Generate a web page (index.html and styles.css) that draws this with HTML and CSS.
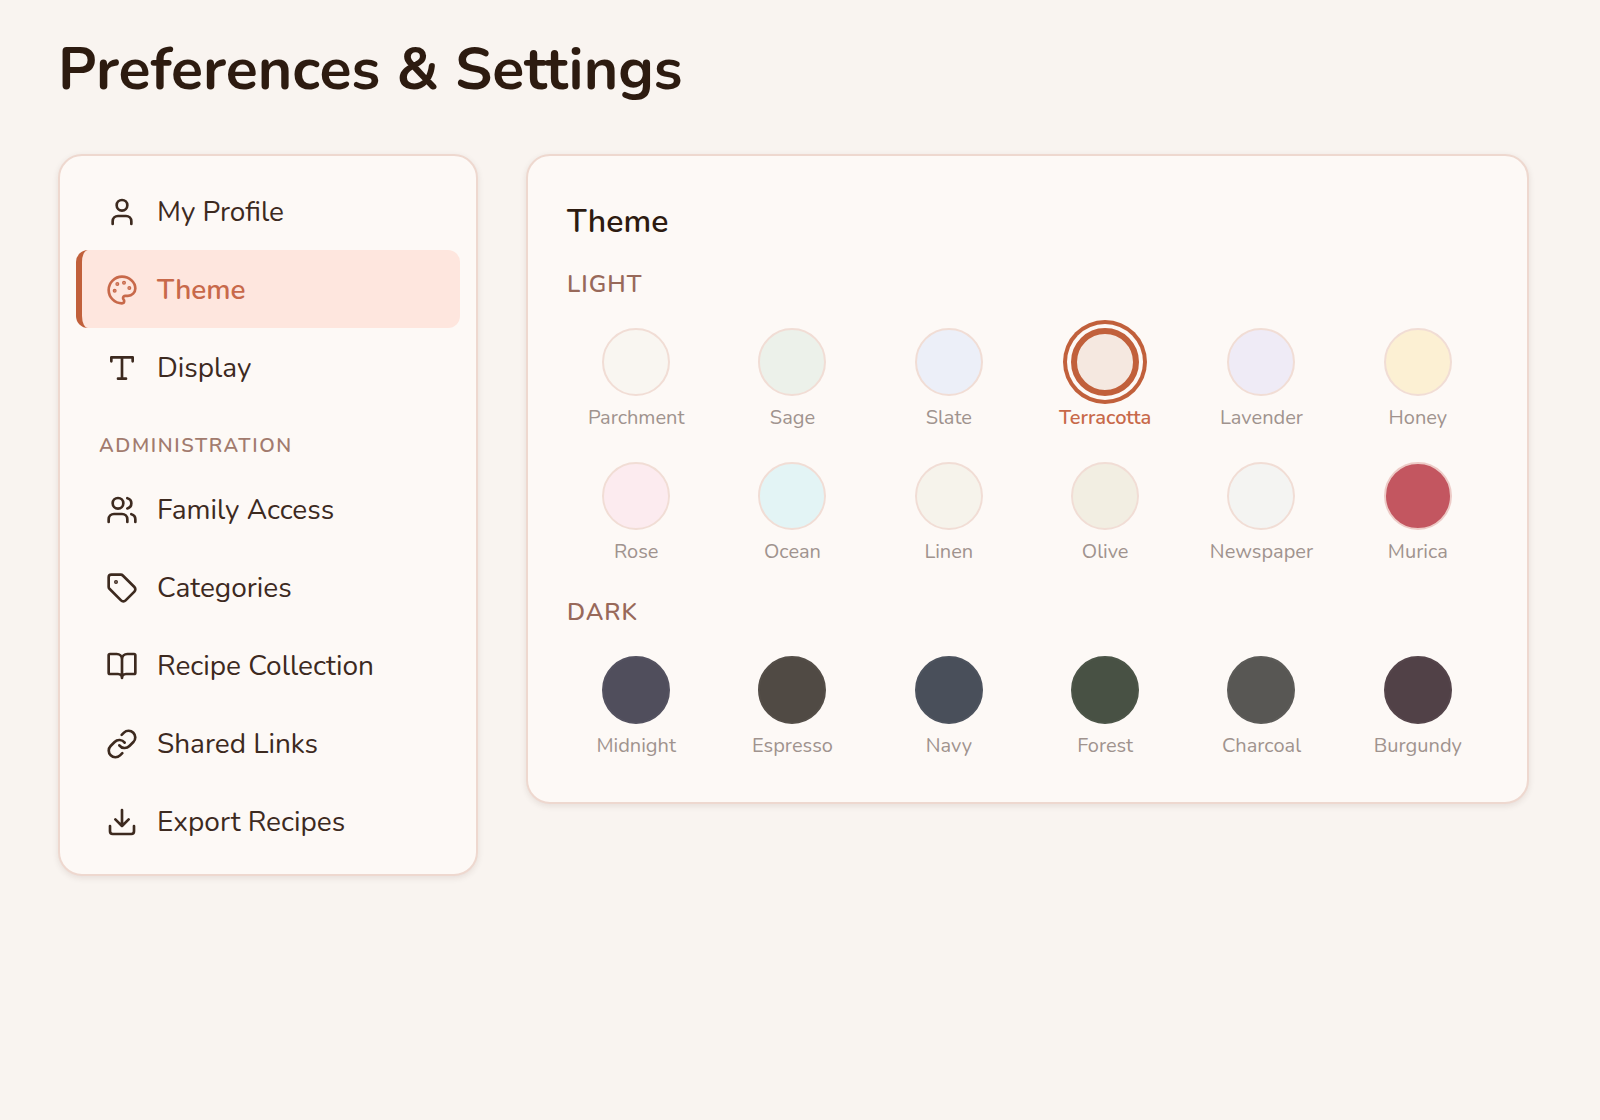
FILE: index.html
```html
<!DOCTYPE html>
<html lang="en">
<head>
  <meta charset="UTF-8">
  <meta name="viewport" content="width=device-width, initial-scale=1">
  <title>Preferences &amp; Settings</title>
  <link rel="stylesheet" href="styles.css">
</head>
<body>
  <h1>Preferences &amp; Settings</h1>

  <div class="layout">
    <!-- Settings menu -->
    <nav class="card sidebar">
      <a class="nav-item" href="#profile">
        <svg class="icon" viewBox="0 0 24 24"><path d="M19 21v-2a4 4 0 0 0-4-4H9a4 4 0 0 0-4 4v2"/><circle cx="12" cy="7" r="4"/></svg>
        My Profile
      </a>
      <a class="nav-item active" href="#theme">
        <svg class="icon" viewBox="0 0 24 24"><g fill="currentColor"><circle cx="13.5" cy="6.5" r=".5"/><circle cx="17.5" cy="10.5" r=".5"/><circle cx="8.5" cy="7.5" r=".5"/><circle cx="6.5" cy="12.5" r=".5"/></g><path d="M12 2C6.5 2 2 6.5 2 12s4.5 10 10 10c.926 0 1.648-.746 1.648-1.688 0-.437-.18-.835-.437-1.125-.29-.289-.438-.652-.438-1.125a1.64 1.64 0 0 1 1.668-1.668h1.996c3.051 0 5.555-2.503 5.555-5.554C21.965 6.012 17.461 2 12 2z"/></svg>
        Theme
      </a>
      <a class="nav-item" href="#display">
        <svg class="icon" viewBox="0 0 24 24"><path d="M4 7V4h16v3M9 20h6M12 4v16"/></svg>
        Display
      </a>

      <h2 class="nav-heading">Administration</h2>
      <a class="nav-item" href="#family">
        <svg class="icon" viewBox="0 0 24 24"><path d="M16 21v-2a4 4 0 0 0-4-4H6a4 4 0 0 0-4 4v2"/><circle cx="9" cy="7" r="4"/><path d="M22 21v-2a4 4 0 0 0-3-3.87M16 3.13a4 4 0 0 1 0 7.75"/></svg>
        Family Access
      </a>
      <a class="nav-item" href="#categories">
        <svg class="icon" viewBox="0 0 24 24"><path d="M12.586 2.586A2 2 0 0 0 11.172 2H4a2 2 0 0 0-2 2v7.172a2 2 0 0 0 .586 1.414l8.704 8.704a2.426 2.426 0 0 0 3.42 0l6.58-6.58a2.426 2.426 0 0 0 0-3.42z"/><circle cx="7.5" cy="7.5" r=".5" fill="currentColor"/></svg>
        Categories
      </a>
      <a class="nav-item" href="#recipes">
        <svg class="icon" viewBox="0 0 24 24"><path d="M12 7v14M3 18a1 1 0 0 1-1-1V4a1 1 0 0 1 1-1h5a4 4 0 0 1 4 4 4 4 0 0 1 4-4h5a1 1 0 0 1 1 1v13a1 1 0 0 1-1 1h-6a3 3 0 0 0-3 3 3 3 0 0 0-3-3z"/></svg>
        Recipe Collection
      </a>
      <a class="nav-item" href="#links">
        <svg class="icon" viewBox="0 0 24 24"><path d="M10 13a5 5 0 0 0 7.54.54l3-3a5 5 0 0 0-7.07-7.07l-1.72 1.71"/><path d="M14 11a5 5 0 0 0-7.54-.54l-3 3a5 5 0 0 0 7.07 7.07l1.71-1.71"/></svg>
        Shared Links
      </a>
      <a class="nav-item" href="#export">
        <svg class="icon" viewBox="0 0 24 24"><path d="M21 15v4a2 2 0 0 1-2 2H5a2 2 0 0 1-2-2v-4M7 10l5 5 5-5M12 15V3"/></svg>
        Export Recipes
      </a>
    </nav>

    <!-- Theme picker -->
    <main class="card panel">
      <h2>Theme</h2>

      <h3>Light</h3>
      <div class="swatches">
        <button class="swatch"><span class="dot parchment"></span>Parchment</button>
        <button class="swatch"><span class="dot sage"></span>Sage</button>
        <button class="swatch"><span class="dot slate"></span>Slate</button>
        <button class="swatch selected" aria-pressed="true"><span class="dot terracotta"></span>Terracotta</button>
        <button class="swatch"><span class="dot lavender"></span>Lavender</button>
        <button class="swatch"><span class="dot honey"></span>Honey</button>
        <button class="swatch"><span class="dot rose"></span>Rose</button>
        <button class="swatch"><span class="dot ocean"></span>Ocean</button>
        <button class="swatch"><span class="dot linen"></span>Linen</button>
        <button class="swatch"><span class="dot olive"></span>Olive</button>
        <button class="swatch"><span class="dot newspaper"></span>Newspaper</button>
        <button class="swatch"><span class="dot murica"></span>Murica</button>
      </div>

      <h3>Dark</h3>
      <div class="swatches">
        <button class="swatch"><span class="dot midnight"></span>Midnight</button>
        <button class="swatch"><span class="dot espresso"></span>Espresso</button>
        <button class="swatch"><span class="dot navy"></span>Navy</button>
        <button class="swatch"><span class="dot forest"></span>Forest</button>
        <button class="swatch"><span class="dot charcoal"></span>Charcoal</button>
        <button class="swatch"><span class="dot burgundy"></span>Burgundy</button>
      </div>
    </main>
  </div>
</body>
</html>
```
FILE: styles.css
```css
* {
  box-sizing: border-box;
}
body {
  margin: 0;
  padding: 34px 71px 32px 58px;
  background-color: #f9f4f0;
  color: #2d1b10;
  font-family: Nunito, Lato, sans-serif;
}
h1 {
  margin: 0 0 48px;
  font-size: 59px;
  line-height: 72px;
  font-weight: 700;
}
.layout {
  display: flex;
  align-items: flex-start;
  gap: 48px;
}
.card {
  background-color: #fdf9f6;
  border: 2px solid #eed8cf;
  border-radius: 24px;
  box-shadow: 0 2px 6px rgba(60, 30, 15, 0.1);
}

/* Sidebar */
.sidebar {
  flex: 0 0 420px;
  padding: 16px 16px 14px;
}
.nav-item {
  display: flex;
  align-items: center;
  gap: 19px;
  height: 78px;
  padding: 2px 24px 0;
  border-left: 6px solid transparent;
  border-radius: 12px;
  color: #3d2a1f;
  font-size: 28px;
  text-decoration: none;
}
.nav-item.active {
  background-color: #fee6de;
  border-left-color: #c1603b;
  color: #c8694a;
  font-weight: 600;
}
.icon {
  flex: none;
  width: 32px;
  height: 32px;
  fill: none;
  stroke: currentColor;
  stroke-width: 2;
  stroke-linecap: round;
  stroke-linejoin: round;
}
.nav-heading {
  margin: 26px 23px 10px;
  color: #a27b6e;
  font-size: 20px;
  line-height: 28px;
  font-weight: 600;
  letter-spacing: 0.08em;
  text-transform: uppercase;
}

/* Theme panel */
.panel {
  flex: 1;
  min-width: 0;
  padding: 42px 40px 34px 39px;
}
.panel h2 {
  margin: 0 0 20px;
  font-size: 32px;
  line-height: 48px;
  font-weight: 600;
}
.panel h3 {
  margin: 0 0 18px;
  color: #98695a;
  font-size: 24px;
  line-height: 36px;
  font-weight: 600;
  letter-spacing: 1px;
  text-transform: uppercase;
}
.swatches {
  display: grid;
  grid-template-columns: repeat(6, 1fr);
  gap: 14px 18px;
}
.swatches + h3 {
  margin-top: 20px;
}
.swatch {
  display: flex;
  flex-direction: column;
  align-items: center;
  gap: 8px;
  padding: 8px 0;
  border: 0;
  background: none;
  color: #a0938e;
  font-family: inherit;
  font-size: 20px;
  line-height: 28px;
  cursor: pointer;
}
.dot {
  width: 68px;
  height: 68px;
  border: 2px solid #f1ddd5;
  border-radius: 50%;
}
.swatch.selected {
  color: #c8694a;
  font-weight: 600;
}
.swatch.selected .dot {
  border: 6px solid #c1603b;
  box-shadow: 0 0 0 4px #fdf9f6, 0 0 0 8px #c1603b;
}

/* Light themes */
.parchment { background-color: #f9f6f1; }
.sage { background-color: #ecf1ea; }
.slate { background-color: #eceff8; }
.terracotta { background-color: #f5e8e0; }
.lavender { background-color: #efebf6; }
.honey { background-color: #fcf0d3; }
.rose { background-color: #fcebef; }
.ocean { background-color: #e3f4f5; }
.linen { background-color: #f6f3eb; }
.olive { background-color: #f2eee2; }
.newspaper { background-color: #f4f4f2; }
.murica { background-color: #c35660; border-color: #edcbc7; }

/* Dark themes */
.midnight { background-color: #504e5c; border-color: #545260; }
.espresso { background-color: #504a44; border-color: #544e48; }
.navy { background-color: #494f5a; border-color: #4d535e; }
.forest { background-color: #485144; border-color: #4c5548; }
.charcoal { background-color: #585754; border-color: #5c5b58; }
.burgundy { background-color: #514147; border-color: #55454b; }
```
